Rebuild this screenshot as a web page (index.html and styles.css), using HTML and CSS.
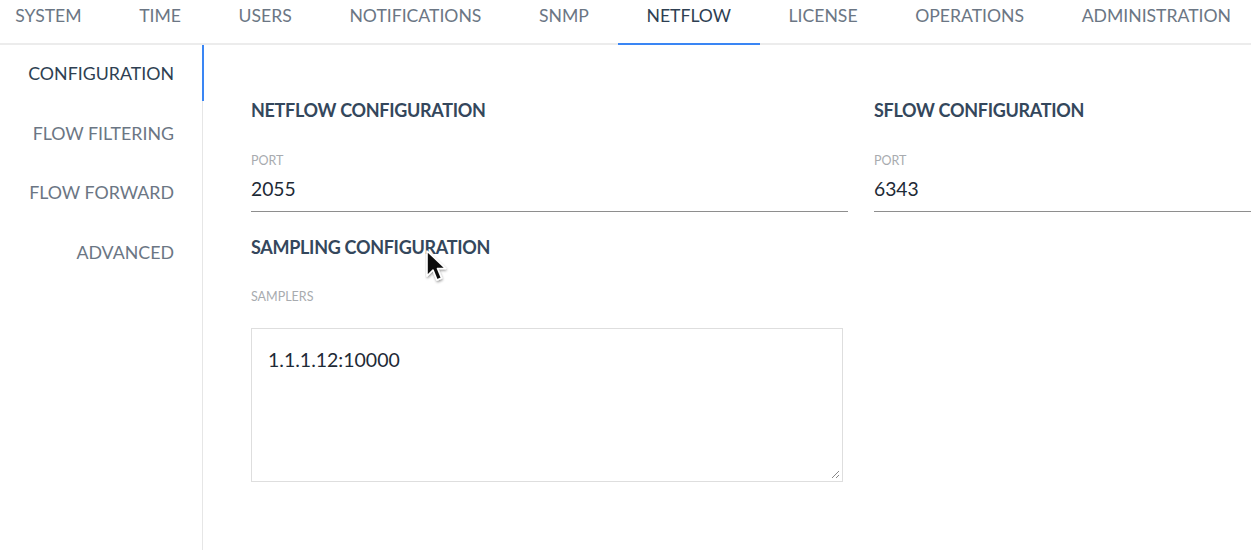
FILE: index.html
```html
<!DOCTYPE html>
<html>
<head>
<meta charset="utf-8">
<link rel="stylesheet" href="styles.css">
</head>
<body>
<nav class="tabs">
  <a class="tab">SYSTEM</a>
  <a class="tab">TIME</a>
  <a class="tab">USERS</a>
  <a class="tab">NOTIFICATIONS</a>
  <a class="tab">SNMP</a>
  <a class="tab active">NETFLOW</a>
  <a class="tab">LICENSE</a>
  <a class="tab">OPERATIONS</a>
  <a class="tab">ADMINISTRATION</a>
</nav>
<div class="main">
  <aside class="side">
    <a class="side-item active">CONFIGURATION</a>
    <a class="side-item">FLOW FILTERING</a>
    <a class="side-item">FLOW FORWARD</a>
    <a class="side-item">ADVANCED</a>
  </aside>
  <section class="content">
    <div class="row">
      <div class="col">
        <h3 class="heading">NETFLOW CONFIGURATION</h3>
        <label class="label">PORT</label>
        <div class="field">2055</div>
      </div>
      <div class="col">
        <h3 class="heading">SFLOW CONFIGURATION</h3>
        <label class="label">PORT</label>
        <div class="field">6343</div>
      </div>
    </div>
    <h3 class="heading heading-sampling">SAMPLING CONFIGURATION</h3>
    <label class="label label-samplers">SAMPLERS</label>
    <div class="textarea">1.1.1.12:10000
      <svg class="grip" width="10" height="10" viewBox="0 0 10 10"><path d="M9 2 L2 9 M9 6 L6 9" stroke="#888" stroke-width="1"/></svg>
    </div>
  </section>
</div>
<svg class="cursor" width="26" height="38" viewBox="0 0 26 38"><defs><filter id="sh" x="-30%" y="-30%" width="160%" height="160%"><feDropShadow dx="0.5" dy="1.5" stdDeviation="1" flood-opacity="0.4"/></filter></defs><path d="M2 2 L2 27 L8 21 L12 31 L16.5 29 L12.5 19.5 L20.5 19.5 Z" fill="#111" stroke="#fff" stroke-width="1.6" stroke-linejoin="round" filter="url(#sh)"/></svg>
</body>
</html>
```
FILE: styles.css
```css
* { box-sizing: border-box; }
html, body { margin: 0; padding: 0; background: #fff; }
body {
  font-family: Lato, "Noto Sans", sans-serif;
  width: 1251px;
  height: 550px;
  overflow: hidden;
  position: relative;
}
.tabs {
  display: flex;
  height: 45px;
  border-bottom: 2px solid #ececec;
  margin-left: -13.5px;
}
.tab {
  display: block;
  padding: 5px 28.8px 0;
  font-size: 17.6px;
  line-height: 22px;
  color: #6b7684;
  white-space: nowrap;
  height: 45px;
}
.tab.active {
  color: #2e3f52;
  border-bottom: 2px solid #3a86f4;
}
.main {
  display: flex;
  height: 505px;
}
.side {
  width: 203px;
  flex: none;
  border-right: 1px solid #e6e6e6;
  display: flex;
  flex-direction: column;
}
.side-item {
  display: flex;
  align-items: center;
  justify-content: flex-end;
  height: 59.5px;
  padding-right: 29px;
  font-size: 17.8px;
  color: #6b7684;
  margin-right: -1px;
}
.side-item.active {
  color: #2e3f52;
  border-right: 2px solid #3a86f4;
  padding-right: 28px;
  height: 56px;
  margin-right: -2px;
}
.side-item.active + .side-item { margin-top: 2px; }
.content {
  padding: 54px 0 0 48px;
  flex: 1;
  overflow: hidden;
}
.row {
  display: flex;
  gap: 26px;
}
.col {
  width: 597px;
  flex: none;
}
.heading {
  margin: 0;
  font-size: 18px;
  line-height: 22px;
  font-weight: 700;
  color: #34475c;
  letter-spacing: -0.3px;
}
.label {
  display: block;
  margin-top: 33px;
  font-size: 12.5px;
  line-height: 14px;
  color: #a8abaf;
}
.field {
  margin-top: 9px;
  font-size: 19.3px;
  line-height: 24px;
  padding-bottom: 10px;
  border-bottom: 1px solid #8e8e8e;
  color: #1e2a36;
}
.heading-sampling {
  margin-top: 24px;
}
.label-samplers {
  margin-top: 32px;
}
.textarea {
  position: relative;
  margin-top: 24px;
  width: 592px;
  height: 154px;
  border: 1px solid #dedede;
  padding: 19px 16px;
  font-size: 19.5px;
  line-height: 24px;
  color: #1e2a36;
}
.grip {
  position: absolute;
  right: 2px;
  bottom: 2px;
}
.cursor {
  position: absolute;
  left: 425px;
  top: 249px;
}
```
